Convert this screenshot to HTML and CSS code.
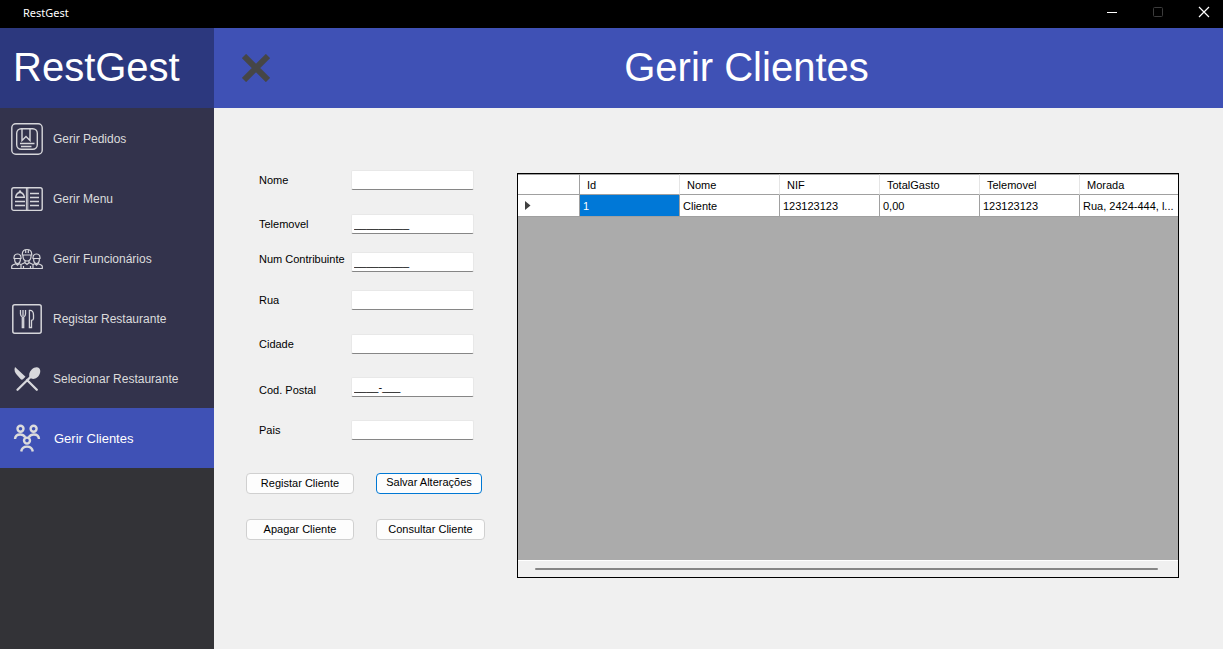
FILE: index.html
```html
<!DOCTYPE html>
<html lang="pt">
<head>
<meta charset="utf-8">
<title>RestGest</title>
<link rel="stylesheet" href="styles.css">
</head>
<body>
<div class="window">
  <header class="titlebar">
    <span class="titlebar-name">RestGest</span>
    <div class="titlebar-controls">
      <button class="win-btn" type="button" aria-label="Minimizar"><svg width="12" height="12" viewBox="0 0 12 12"><path d="M1 6.5H11" stroke="#fff"/></svg></button>
      <button class="win-btn" type="button" aria-label="Maximizar" disabled><svg width="12" height="12" viewBox="0 0 12 12"><rect x="1.5" y="1.5" width="9" height="9" rx="1" fill="none" stroke="#3c3c3c"/></svg></button>
      <button class="win-btn" type="button" aria-label="Fechar janela"><svg width="12" height="12" viewBox="0 0 12 12"><path d="M1 1L11 11M11 1L1 11" stroke="#fff" stroke-width="1.2"/></svg></button>
    </div>
  </header>
  <div class="app">
    <aside class="sidebar">
      <div class="logo">RestGest</div>
      <nav class="nav">
        <button class="nav-item" type="button">
          <svg class="nav-icon" viewBox="0 0 32 32" fill="none" stroke="#d6d6da" stroke-width="1.4"><rect x=".8" y=".8" width="30.4" height="30.4" rx="4"/><rect x="5.7" y="5.7" width="20.6" height="20.6" rx="4.5"/><path d="M11 6V17.5L15 13.5L19 17.5V6M9 20.5H23.5M10 23.5H20.5"/></svg>
          Gerir Pedidos</button>
        <button class="nav-item" type="button">
          <svg class="nav-icon" viewBox="0 0 32 32" fill="none" stroke="#d6d6da" stroke-width="1.4"><rect x=".8" y="4.8" width="30.4" height="22.6" rx="2"/><path d="M15.4 5V27M16.8 5V27" stroke-width="1"/><path d="M4 14.2H14M4.7 13.5Q6 9.5 9 9.5T13.3 13.5M8 9.3L9 8L10 9.3M4 18.5H14M4 22.5H14M19 10.5H28M19 14.5H28M19 18.5H28M19 22.5H28"/></svg>
          Gerir Menu</button>
        <button class="nav-item" type="button">
          <svg class="nav-icon" viewBox="0 0 32 32" fill="none" stroke="#d6d6da" stroke-width="1.2"><path d="M11.3 12V11Q11.5 6.5 16 6.5T20.7 11V12ZM12 12V14Q12.5 18 16 18T20 14V12M14.7 7V10M17.3 7V10M10 25.5V21.5L14 19.5V18M22 25.5V21.5L18 19.5V18M13.7 19.5L16 21.5L18.3 19.5M12.5 25V23M19.5 25V23"/><path d="M3 15.5V14.5Q3.2 11 6.5 11T10 14.5V15.5ZM3.7 16V17.5Q4 20.5 6.5 20.5T9.3 17.5V16M22 15.5V14.5Q22.2 11 25.5 11T29 14.5V15.5ZM22.7 16V17.5Q23 20.5 25.5 20.5T28.3 17.5V16"/><path d="M.7 25.5V23.5Q.8 22.2 2.2 21.8L5 20.8L6.5 22.2L8 20.8L10 21.5M31.3 25.5V23.5Q31.2 22.2 29.8 21.8L27 20.8L25.5 22.2L24 20.8L22 21.5M.2 25.5H31.8"/></svg>
          Gerir Funcionários</button>
        <button class="nav-item" type="button">
          <svg class="nav-icon" viewBox="0 0 32 32" fill="none" stroke="#d6d6da" stroke-width="1.5"><rect x="1.8" y="1.8" width="28.4" height="28.4" rx="2"/><path d="M9.5 7V11Q9.6 13.3 11.3 14V24.5H12.7V14Q14.4 13.3 14.5 11V7M12 7V13M18.4 24.5V7.5Q22.5 7 22.5 12V15.5Q22.4 17.3 20.5 17.3V24.5Z" stroke-width="1.3"/></svg>
          Registar Restaurante</button>
        <button class="nav-item" type="button">
          <svg class="nav-icon" viewBox="0 0 32 32" fill="#d8d8dc"><path d="M4 4C2.8 7 4 10 6 12L9.8 16.3Q11 17.3 12.2 16L14.5 13.8Z"/><path d="M28.2 5.2C30.3 7.5 29.2 12 26.3 14.3C24 16.2 21 16.4 18.8 14.8C17.5 12.2 18.2 8.8 20.7 6.5C23 4.2 26.4 3.5 28.2 5.2Z"/><path d="M6.5 26.8L20 13.5M16 17L25.8 26.8" fill="none" stroke="#d8d8dc" stroke-width="2.3" stroke-linecap="round"/></svg>
          Selecionar Restaurante</button>
        <button class="nav-item nav-item--active" type="button" aria-current="page">
          <svg class="nav-icon" viewBox="0 0 32 32" fill="none" stroke="#dcdcdc" stroke-width="2.4"><circle cx="9.5" cy="6.7" r="3"/><circle cx="22.6" cy="6.7" r="3"/><circle cx="16" cy="18.6" r="3"/><path d="M4 17Q4.3 12.5 9.2 12.5Q12.3 12.5 14.2 15.2M28 17Q27.7 12.5 22.8 12.5Q19.7 12.5 17.8 15.2M10.2 29.5Q11 24.6 16 24.6T21.8 29.5"/></svg>
          Gerir Clientes</button>
      </nav>
    </aside>
    <main class="main">
      <div class="page-header">
        <button class="close-page" type="button" aria-label="Fechar"><svg width="28" height="28" viewBox="0 0 28 28"><path d="M2 2L26 26M26 2L2 26" stroke="#464646" stroke-width="6"/></svg></button>
        <h1 class="page-title">Gerir Clientes</h1>
      </div>
      <div class="content">
        <form class="client-form">
          <div class="fields">
            <div class="field"><label for="nome">Nome</label><input id="nome" type="text"></div>
            <div class="field"><label for="tel">Telemovel</label><input id="tel" type="text" value="_________"></div>
            <div class="field field--close field--top"><label for="nif">Num Contribuinte</label><input id="nif" type="text" value="_________"></div>
            <div class="field field--close"><label for="rua">Rua</label><input id="rua" type="text"></div>
            <div class="field"><label for="cidade">Cidade</label><input id="cidade" type="text"></div>
            <div class="field field--near field--bottom"><label for="postal">Cod. Postal</label><input id="postal" type="text" value="____-___"></div>
            <div class="field field--near"><label for="pais">Pais</label><input id="pais" type="text"></div>
          </div>
          <div class="actions">
            <button class="btn" type="button">Registar Cliente</button>
            <button class="btn btn--default" type="button">Salvar Alterações</button>
            <button class="btn" type="button">Apagar Cliente</button>
            <button class="btn" type="button">Consultar Cliente</button>
          </div>
        </form>
        <div class="grid">
          <table class="grid-table">
            <colgroup><col class="col-row"><col class="col-data"><col class="col-data"><col class="col-data"><col class="col-data"><col class="col-data"><col></colgroup>
            <thead><tr><th></th><th>Id</th><th>Nome</th><th>NIF</th><th>TotalGasto</th><th>Telemovel</th><th>Morada</th></tr></thead>
            <tbody><tr><td><svg class="row-arrow" width="6" height="9" viewBox="0 0 6 9"><path d="M0 0L5.5 4.5L0 9Z" fill="#404040"/></svg></td><td class="selected">1</td><td>Cliente</td><td>123123123</td><td>0,00</td><td>123123123</td><td>Rua, 2424-444, l...</td></tr></tbody>
          </table>
          <div class="scrollbar"><div class="scroll-thumb"></div></div>
        </div>
      </div>
    </main>
  </div>
</div>
</body>
</html>
```
FILE: styles.css
```css
* { box-sizing: border-box; }
body {
  margin: 0;
  font-family: "Liberation Sans", Arial, sans-serif;
  font-size: 11px;
  color: #000;
}
button, input { font: inherit; color: inherit; }
svg { display: block; }
.window { display: flex; flex-direction: column; min-height: 100vh; }

.titlebar {
  display: flex;
  justify-content: space-between;
  align-items: center;
  height: 28px;
  padding-left: 23px;
  background: #000;
  color: #fff;
}
.titlebar-name { font: 11px/24px "Noto Sans", sans-serif; padding-bottom: 3px; }
.titlebar-controls { display: flex; align-self: flex-start; gap: 8px; }
.win-btn {
  display: grid;
  place-items: center;
  width: 38px;
  height: 24px;
  padding: 0;
  border: 0;
  background: none;
}

.app { display: flex; flex: 1; }
.sidebar { display: flex; flex-direction: column; flex: 0 0 214px; background: #333337; }
.logo {
  height: 80px;
  padding-left: 13px;
  background: #2c387e;
  color: #fff;
  font-size: 40px;
  line-height: 78px;
}
.nav { display: flex; flex-direction: column; background: #33334c; }
.nav-item {
  display: flex;
  align-items: center;
  gap: 10px;
  height: 60px;
  padding: 2px 0 0 11px;
  border: 0;
  background: none;
  color: #dcdcdc;
  font-size: 12px;
  text-align: left;
}
.nav-item--active { gap: 11px; padding-top: 0; background: #3f51b5; color: #fff; font-size: 13px; }
.nav-icon { width: 32px; height: 32px; flex: none; }

.main { display: flex; flex-direction: column; flex: 1; min-width: 0; background: #f0f0f0; }
.page-header {
  display: flex;
  align-items: center;
  height: 80px;
  padding-left: 28px;
  background: #3f51b5;
}
.close-page { padding: 0; border: 0; background: none; }
.page-title {
  flex: 1;
  align-self: flex-start;
  margin: 0;
  color: #fff;
  font-size: 40px;
  font-weight: 400;
  line-height: 78px;
  text-align: center;
}

.content { display: flex; flex: 1; gap: 32px; padding: 62px 44px 71px 32px; }
.client-form { flex: 0 0 239px; }
.fields { padding-left: 13px; }
.field { display: flex; align-items: center; margin-top: 24px; }
.field:first-child { margin-top: 0; }
.field--close { margin-top: 18px; }
.field--near { margin-top: 23px; }
.field--top { align-items: flex-start; }
.field--bottom { align-items: flex-end; }
.field label { flex: 0 0 92px; line-height: 14px; white-space: nowrap; }
.field input {
  width: 123px;
  height: 20px;
  padding: 0 2px;
  border: 1px solid #e8e8e8;
  border-bottom-color: #868686;
  border-radius: 2px;
  background: #fff;
}
.actions {
  display: grid;
  grid-template-columns: 108px 109px;
  gap: 25px 22px;
  margin-top: 33px;
}
.btn {
  height: 21px;
  padding: 0;
  border: 1px solid #d0d0d0;
  border-radius: 4px;
  background: #fdfdfd;
  line-height: 17px;
}
.btn--default { width: 106px; padding-bottom: 2px; border-color: #0078d4; }

.grid {
  display: flex;
  flex-direction: column;
  flex: 1;
  min-width: 0;
  margin-top: 3px;
  border: 1px solid #000;
  background: #ababab;
}
.grid-table { width: 100%; table-layout: fixed; border-collapse: separate; border-spacing: 0; background: #fff; }
.col-row { width: 62px; }
.col-data { width: 100px; }
.grid-table th, .grid-table td {
  height: 21px;
  padding: 0 3px;
  border-right: 1px solid #a0a0a0;
  border-bottom: 1px solid #a0a0a0;
  font-weight: 400;
  text-align: left;
  white-space: nowrap;
  overflow: hidden;
  text-overflow: ellipsis;
}
.grid-table th { padding: 0 7px; border-right-color: #e5e5e5; border-top: 1px solid #a0a0a0; }
.grid-table th:first-child { border-right-color: #a0a0a0; }
.grid-table td { height: 22px; }
.grid-table th:last-child, .grid-table td:last-child { border-right: 0; }
.grid-table td:first-child { padding-left: 7px; }
.grid-table .selected { background: #0078d7; color: #fff; }
.scrollbar { margin-top: auto; padding: 7px 20px 7px 17px; border-top: 1px solid #fff; background: #f0f0f0; }
.scroll-thumb { height: 2px; border-radius: 1px; background: #868686; }
```
